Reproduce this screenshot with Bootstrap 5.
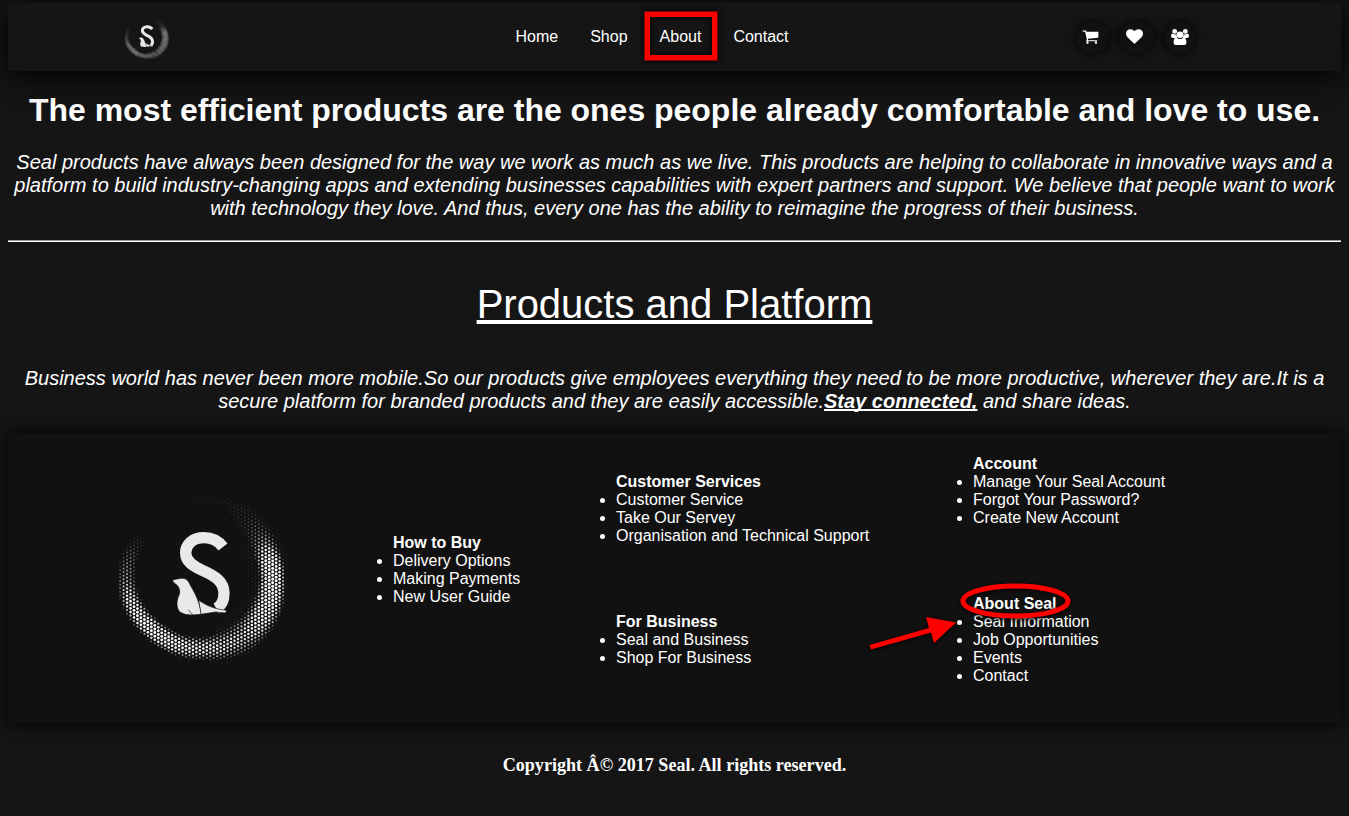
<!DOCTYPE html>
<html lang="en">
<head>
<meta charset="utf-8">
<meta name="viewport" content="width=device-width, initial-scale=1">
<title>Seal - About</title>
<link href="https://cdn.jsdelivr.net/npm/bootstrap@5.3.0/dist/css/bootstrap.min.css" rel="stylesheet">
<style>
body{background:#151515;color:#fff;font:16px/18px "Liberation Sans",Arial,sans-serif;padding:3px 8px 0;min-height:816px;overflow-x:hidden}
.site-nav{height:68px;background:#151515;box-shadow:0 5px 30px #000;padding:0}
.site-nav .nav-link{color:#fff;padding:0;line-height:18px}
.nav-side{flex:0 0 507.5px}
.nav-menu{gap:32px;flex:1}
.logo-small{width:53px;height:47.7px;margin-left:113px;margin-top:2px}
.pill{height:31px;padding-bottom:1px;border-radius:50%;box-shadow:0 0 10px #000;background:#111;color:#fff}
.mark-box{position:absolute;left:-16px;top:-17px;width:74px;height:50px;border:6px solid red;outline:1px solid #7d0808;outline-offset:-1px;box-shadow:0 0 6px #000,inset 0 0 6px #000}
h1{font-size:32px;line-height:37px;font-weight:700;margin:21px 0 22px;white-space:nowrap;letter-spacing:-.02px}
.intro{font-size:20px;line-height:23px;font-style:italic;margin:0 0 20px}
.intro u{text-decoration-skip-ink:none;text-decoration-thickness:2px}
.rule{height:2px;border:0;border-top:1px solid #9a9a9a;background:#fff;opacity:1;margin:0}
h2{font-size:40px;line-height:46px;font-weight:400;text-decoration:underline;text-decoration-thickness:4px;margin:39px 0 40px}
.site-foot{height:290px;background:#111;box-shadow:0 0 15px #000}
.logo-big{width:200px;height:180px;margin-left:97px;margin-top:57px}
.site-foot ul{padding:0;margin-bottom:0}
.site-foot ul b{display:block;line-height:18px}
.col-buy{margin-left:88px;margin-top:101px;width:223px}
.col-service{margin-top:40px;width:357px;gap:68px}
.col-account{margin-top:22px;gap:68px}
.pointer{position:absolute;left:-108px;top:-15px;width:215px;height:80px;filter:drop-shadow(0 1px 2px #000)}
.copy{font:bold 18.080px/22px "Liberation Serif","Times New Roman",serif;margin:31px 0 0}
</style>
</head>
<body>
<svg width="0" height="0" class="position-absolute" aria-hidden="true">
  <symbol id="seal" viewBox="0 0 600 540">
    <g id="dots" fill="#fff"></g>
    <path d="M354 171C338 150 315 143 297 143C262 143 242 164 242 188C242 214 263 228 292 241C331 258 357 275 357 310C357 330 350 347 334 356" fill="none" stroke="#e8e9eb" stroke-width="34"/>
    <path d="M281 331C300 343 325 358 362 360Q367 366 360 369L332 366L287 373Z" fill="#e8e9eb" stroke="#111" stroke-width="2"/>
    <path d="M202 270Q215 267 228 265Q246 263 253 280C263 300 283 325 288 373L262 375Q240 376 224 366C212 350 215 330 223 313C226 299 222 287 207 279Z" fill="#e8e9eb" stroke="#111" stroke-width="2"/>
    <path d="M251 359Q255 370 266 375" fill="none" stroke="#222" stroke-width="2"/>
  </symbol>
</svg>

<nav class="navbar site-nav d-flex flex-nowrap align-items-center">
  <div class="nav-side"><svg class="logo-small d-block"><use href="#seal"/></svg></div>
  <div class="nav-menu d-flex">
    <a class="nav-link" href="#">Home</a>
    <a class="nav-link" href="#">Shop</a>
    <a class="nav-link position-relative" href="#">About<span class="mark-box"></span></a>
    <a class="nav-link" href="#">Contact</a>
  </div>
  <div class="d-flex" style="gap:10px;margin-right:146px">
    <span class="pill d-flex align-items-center justify-content-center" style="width:33px"><svg class="me-1" width="17" height="17" viewBox="0 0 1792 1792" fill="currentColor"><path d="M704 1536q0 52-38 90t-90 38-90-38-38-90 38-90 90-38 90 38 38 90zm896 0q0 52-38 90t-90 38-90-38-38-90 38-90 90-38 90 38 38 90zm128-1088v512q0 24-16.500 42.500t-40.500 21.500l-1044 122q13 60 13 70 0 16-24 64h920q26 0 45 19t19 45-19 45-45 19h-1024q-26 0-45-19t-19-45q0-11 8-31.500t16-36 21.500-40 15.500-29.500l-177-823h-204q-26 0-45-19t-19-45 19-45 45-19h256q16 0 28.500 6.500t19.500 15.500 13 24.500 8 26 5.500 29.500 4.500 26h1201q26 0 45 19t19 45z"/></svg></span>
    <span class="pill d-flex align-items-center justify-content-center" style="width:35px"><svg class="me-1" width="17" height="17" viewBox="0 0 1792 1792" fill="currentColor"><path d="M896 1664q-26 0-44-18l-624-602q-10-8-27.500-26t-55.500-65.500-68-97.500-53.500-121-23.500-138q0-220 127-344t351-124q62 0 126.500 21.500t120 58 95.500 68.500 76 68q36-36 76-68t95.500-68.500 120-58 126.500-21.500q224 0 351 124t127 344q0 221-229 450l-623 600q-18 18-44 18z"/></svg></span>
    <span class="pill d-flex align-items-center justify-content-center" style="width:31px"><svg width="18" height="18" viewBox="0 0 18 18" fill="currentColor"><circle cx="3.7" cy="3.4" r="2.4"/><circle cx="14.3" cy="3.4" r="2.4"/><path d="M0 8.2Q0 5.6 1.5 5.6Q3.7 7 5.6 6.2Q5.400 8.500 6.300 9.900H2Q0 9.900 0 8.200ZM18 8.200Q18 5.600 16.500 5.600Q14.300 7 12.400 6.200Q12.600 8.500 11.700 9.900H16Q18 9.900 18 8.200Z"/><circle cx="9" cy="6.800" r="3.300"/><path d="M2.600 14.200Q2.600 9.800 5.400 9.800Q9 12.200 12.600 9.800Q15.400 9.800 15.400 14.200Q15.400 17 13 17H5Q2.600 17 2.600 14.200Z"/></svg></span>
  </div>
</nav>

<main class="text-center">
  <h1>The most efficient products are the ones people already comfortable and love to use.</h1>
  <p class="intro">Seal products have always been designed for the way we work as much as we live. This products are helping to collaborate in innovative ways and a platform to build industry-changing apps and extending businesses capabilities with expert partners and support. We believe that people want to work with technology they love. And thus, every one has the ability to reimagine the progress of their business.</p>
  <hr class="rule">
  <h2>Products and Platform</h2>
  <p class="intro">Business world has never been more mobile.So our products give employees everything they need to be more productive, wherever they are.It is a secure platform for branded products and they are easily accessible.<b><u>Stay connected,</u></b> and share ideas.</p>
</main>

<footer>
  <div class="site-foot d-flex align-items-start">
    <svg class="logo-big flex-shrink-0"><use href="#seal"/></svg>
    <ul class="col-buy"><b>How to Buy</b><li>Delivery Options</li><li>Making Payments</li><li>New User Guide</li></ul>
    <div class="col-service d-flex flex-column">
      <ul><b>Customer Services</b><li>Customer Service</li><li>Take Our Servey</li><li>Organisation and Technical Support</li></ul>
      <ul><b>For Business</b><li>Seal and Business</li><li>Shop For Business</li></ul>
    </div>
    <div class="col-account d-flex flex-column">
      <ul><b>Account</b><li>Manage Your Seal Account</li><li>Forgot Your Password?</li><li>Create New Account</li></ul>
      <ul class="position-relative"><b>About Seal</b><li>Seal Information</li><li>Job Opportunities</li><li>Events</li><li>Contact</li>
        <svg class="pointer" viewBox="865 580 215 80"><ellipse cx="1015.500" cy="601" rx="52.500" ry="15" fill="none" stroke="red" stroke-width="5"/><path d="M869.500 645L929 628L926 617L956 622.500L934 643L931 632.500L871 649.500Z" fill="red"/></svg>
      </ul>
    </div>
  </div>
  <p class="copy text-center">Copyright Â© 2017 Seal. All rights reserved.</p>
</footer>
<script src="https://cdn.jsdelivr.net/npm/bootstrap@5.3.0/dist/js/bootstrap.bundle.min.js"></script>
<script>
// Halftone crescent: [angle, brightness, mid radius, half width]
const stops=[[0,1,210,38],[30,.85,212,44],[55,.6,212,46],[90,.7,210,32],[135,.95,214,30],[160,.8,224,28],[180,.45,228,26],[198,.28,226,24],[212,.08,222,20],[222,0,222,14],[245,0,230,12],[260,.05,236,10],[285,.08,236,12],[305,.14,222,34],[322,.3,212,38],[335,.65,208,38],[345,.95,208,38],[360,1,210,38]];
let dots='';
for(let i=0;i<54;i++)for(let j=0;j<50;j++){
  const x=35+i*10.4,y=8+j*10.8+(i%2)*5.4+i*.35;
  const dx=x-292,dy=y-265,r=Math.hypot(dx,dy),a=(Math.atan2(dy,dx)*180/Math.PI+360)%360;
  let k=0;while(k<stops.length-2&&a>stops[k+1][0])k++;
  const p=stops[k],q=stops[k+1],t=(a-p[0])/(q[0]-p[0]),v=n=>p[n]+(q[n]-p[n])*t;
  const d=Math.abs(r-v(2))/v(3);
  let b=v(1)*Math.max(0,1-Math.pow(d/1.15,2.2));
  if((a<75||a>320)&&r>115&&r<285)b=Math.max(b,.13*Math.max(0,1-Math.abs(r-200)/85));
  if(b>.03)dots+=`<circle cx="${x.toFixed(1)}" cy="${y.toFixed(1)}" r="${(2+2.6*b).toFixed(2)}" opacity="${Math.min(1,b*1.5).toFixed(2)}"/>`;
}
document.getElementById('dots').innerHTML=dots;
</script>
</body>
</html>
